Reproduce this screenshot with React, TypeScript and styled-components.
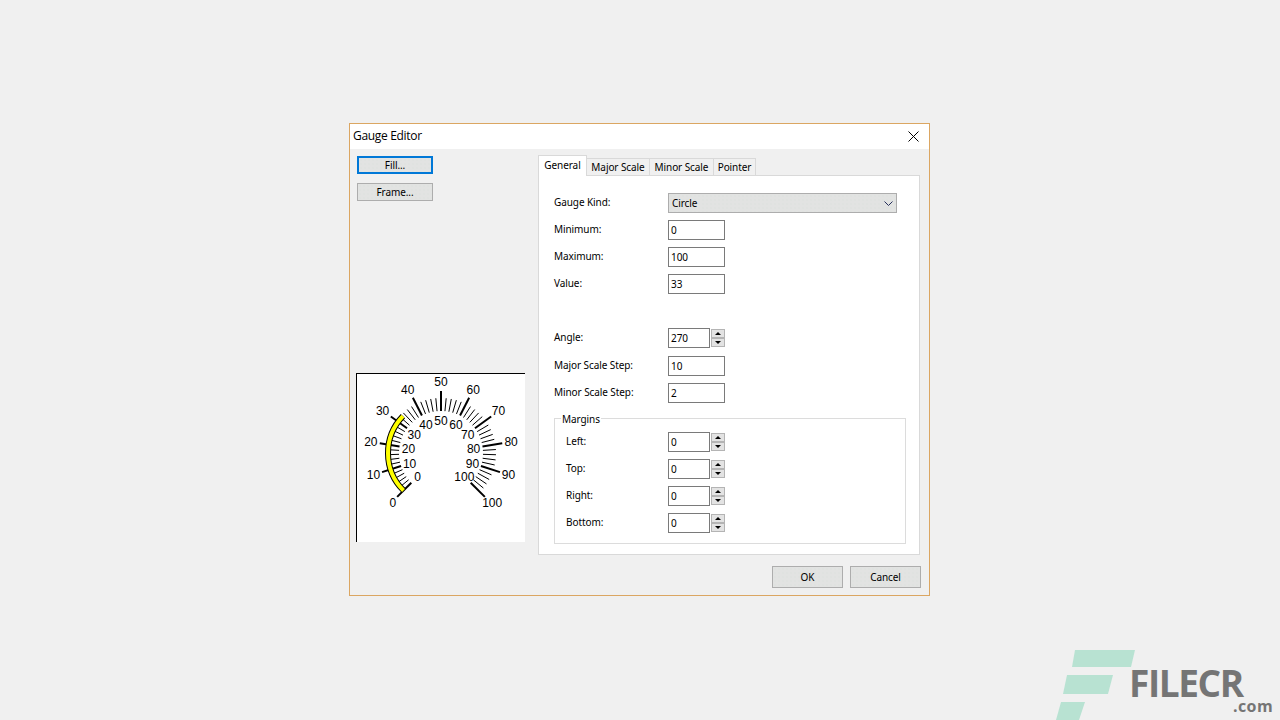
import React from "react";
import styled, { createGlobalStyle, css } from "styled-components";

const GlobalStyle = createGlobalStyle`
  html, body {
    margin: 0;
    height: 100%;
    background: #f0f0f0;
    overflow: hidden;
  }
  body {
    font-family: "Noto Sans", "Open Sans", sans-serif;
    font-size: 10px;
    letter-spacing: -0.08px;
    color: #000;
  }
`;

const dither = css`
  background-color: #e2e3e2;
  background-image: radial-gradient(circle, #dde0de 0.6px, transparent 0.8px);
  background-size: 4px 4px;
`;

const Desktop = styled.div`
  height: 720px;
  padding: 123px 0 0 349px;
  box-sizing: border-box;
`;

const Win = styled.div`
  width: 581px;
  height: 473px;
  box-sizing: border-box;
  border: 1px solid #dba662;
  background: #f0f0f0;
  display: flex;
  flex-direction: column;
`;

const TitleBar = styled.div`
  height: 25px;
  flex: none;
  background: #fff;
  display: flex;
  align-items: center;
  justify-content: space-between;
  padding: 0 10px 2px 3px;
  box-sizing: border-box;
  font-family: "Open Sans", sans-serif;
  font-size: 12px;
  letter-spacing: -0.32px;
`;

const CloseIcon = styled.svg`
  width: 11px;
  height: 11px;
  display: block;
  margin-top: 2px;
`;

const Body = styled.div`
  flex: 1;
  display: flex;
  padding: 7px 9px 0 6px;
  gap: 13px;
  min-height: 0;
`;

const LeftColumn = styled.div`
  width: 169px;
  flex: none;
  display: flex;
  flex-direction: column;
  align-items: flex-start;
  gap: 9px;
  padding-bottom: 13px;
`;

const Button = styled.button<{ $focused?: boolean; $w: number; $h: number }>`
  width: ${(p) => p.$w}px;
  height: ${(p) => p.$h}px;
  box-sizing: border-box;
  padding: 0;
  font: inherit;
  letter-spacing: inherit;
  color: #000;
  ${dither}
  border: ${(p) => (p.$focused ? "2px solid #0078d7" : "1px solid #adadad")};
`;

const SideButton = styled(Button)`
  margin-left: 1px;
`;

const GaugeBox = styled.div`
  margin-top: auto;
  width: 169px;
  height: 169px;
  box-sizing: border-box;
  background: #fff;
  border-top: 1px solid #000;
  border-left: 1px solid #000;
`;

const GaugeSvg = styled.svg`
  display: block;
  font-family: "Liberation Sans", sans-serif;
  font-size: 12px;
  letter-spacing: 0;
`;

const RightColumn = styled.div`
  flex: 1;
  display: flex;
  flex-direction: column;
  min-width: 0;
`;

const Tabs = styled.div`
  display: flex;
  align-items: flex-end;
  height: 20px;
  margin-bottom: -1px;
  position: relative;
  z-index: 1;
`;

const Tab = styled.div<{ $active?: boolean; $w: number }>`
  width: ${(p) => p.$w}px;
  height: ${(p) => (p.$active ? 21 : 18)}px;
  box-sizing: border-box;
  border: 1px solid #d9d9d9;
  border-left-width: ${(p) => (p.$active ? 1 : 0)}px;
  border-bottom-width: ${(p) => (p.$active ? 0 : 1)}px;
  background: ${(p) => (p.$active ? "#fff" : "#f0f0f0")};
  display: flex;
  align-items: center;
  justify-content: center;
  padding-bottom: ${(p) => (p.$active ? 2 : 0)}px;
`;

const Panel = styled.div`
  height: 380px;
  box-sizing: border-box;
  background: #fff;
  border: 1px solid #d9d9d9;
  padding: 17px 0 0 15px;
`;

const Row = styled.div<{ $mt?: number; $mb?: number }>`
  display: flex;
  align-items: center;
  height: 20px;
  margin-bottom: ${(p) => p.$mb ?? 7}px;
  margin-top: ${(p) => p.$mt ?? 0}px;
`;

const Label = styled.div<{ $w: number }>`
  width: ${(p) => p.$w}px;
  flex: none;
  padding-bottom: 2px;
`;

const Select = styled.div`
  width: 229px;
  height: 20px;
  box-sizing: border-box;
  ${dither}
  border: 1px solid #adadad;
  display: flex;
  align-items: center;
  justify-content: space-between;
  padding: 0 3px 0 3px;
`;

const Chevron = styled.svg`
  width: 9px;
  height: 5px;
  display: block;
`;

const Input = styled.div<{ $w: number }>`
  width: ${(p) => p.$w}px;
  height: 20px;
  box-sizing: border-box;
  background: #fff;
  border: 1px solid #7a7a7a;
  padding-left: 2px;
  display: flex;
  align-items: center;
`;

const Spin = styled.div`
  width: 14px;
  height: 18px;
  margin-left: 1px;
  display: flex;
  flex-direction: column;
  justify-content: space-between;
`;

const SpinPart = styled.div<{ $down?: boolean }>`
  height: 9px;
  box-sizing: border-box;
  background: #e3e3e3;
  border: 1px solid #b4b4b4;
  display: flex;
  align-items: center;
  justify-content: center;
  &::after {
    content: "";
    border-left: 3px solid transparent;
    border-right: 3px solid transparent;
    ${(p) =>
      p.$down ? "border-top: 3px solid #000;" : "border-bottom: 3px solid #000;"}
  }
`;

const Group = styled.div`
  position: relative;
  width: 352px;
  height: 126px;
  box-sizing: border-box;
  margin-top: 15px;
  border: 1px solid #dcdcdc;
  padding: 13px 0 0 11px;
`;

const Legend = styled.div`
  position: absolute;
  top: -7px;
  left: 6px;
  padding: 0 1px;
  background: #fff;
  line-height: 14px;
`;

const Footer = styled.div`
  display: flex;
  justify-content: flex-end;
  gap: 7px;
  padding: 11px 8px 0 0;
  height: 40px;
  box-sizing: border-box;
  flex: none;
`;

const Watermark = styled.svg`
  position: absolute;
  left: 1050px;
  top: 645px;
`;

const WatermarkName = styled.div`
  position: absolute;
  left: 1129px;
  top: 668px;
  font-family: "Open Sans", sans-serif;
  font-weight: 700;
  font-size: 37px;
  line-height: 30px;
  letter-spacing: -1.4px;
  color: #757575;
`;

const WatermarkDomain = styled.div`
  position: absolute;
  left: 1233px;
  top: 699px;
  font-family: "Open Sans", sans-serif;
  font-weight: 700;
  font-size: 16px;
  line-height: 14px;
  letter-spacing: 0.4px;
  color: #757575;
`;

const CX = 84;
const CY = 79;

// outer labels that sit a little off the circle in the original
const labelNudge: Record<number, number> = { 0: 2, 30: -1, 40: -1, 100: 1 };

function polar(v: number, r: number) {
  const a = ((-135 + 2.7 * v) * Math.PI) / 180;
  return { x: CX + r * Math.sin(a), y: CY - r * Math.cos(a) };
}

function arcPath(to: number, r: number) {
  const s = polar(0, r);
  const e = polar(to, r);
  return `M${s.x} ${s.y}A${r} ${r} 0 0 1 ${e.x} ${e.y}`;
}

const Gauge = () => {
  const ticks: React.ReactNode[] = [];
  for (let v = 0; v <= 100; v += 2) {
    const major = v % 10 === 0;
    const a = polar(v, 42);
    const b = polar(v, major ? 62 : 55);
    ticks.push(
      <line key={v} x1={a.x} y1={a.y} x2={b.x} y2={b.y} stroke="#000" strokeWidth={major ? 2 : 1} />
    );
  }
  const labels: React.ReactNode[] = [];
  for (let v = 0; v <= 100; v += 10) {
    const o = polar(v, 71);
    const i = polar(v, 33);
    labels.push(
      <text key={"o" + v} x={o.x + (labelNudge[v] ?? 0)} y={o.y + 4} textAnchor="middle">{v}</text>,
      <text key={"i" + v} x={i.x} y={i.y + 5} textAnchor="middle">{v}</text>
    );
  }
  return (
    <GaugeSvg width="168" height="168" viewBox="0 0 168 168">
      {ticks}
      <path d={arcPath(33, 53)} fill="none" stroke="#000" strokeWidth="6" />
      <path d={arcPath(33, 53)} fill="none" stroke="#ff0" strokeWidth="4" />
      {labels}
    </GaugeSvg>
  );
};

const Spinner = () => (
  <Spin>
    <SpinPart />
    <SpinPart $down />
  </Spin>
);

const App = () => {
  return (
    <Desktop>
      <GlobalStyle />
      <Win>
        <TitleBar>
          Gauge Editor
          <CloseIcon viewBox="0 0 11 11">
            <path d="M0.5 0.5L10.5 10.5M10.5 0.5L0.5 10.5" stroke="#000" strokeWidth="1" fill="none" />
          </CloseIcon>
        </TitleBar>
        <Body>
          <LeftColumn>
            <SideButton $focused $w={76} $h={18}>Fill...</SideButton>
            <SideButton $w={76} $h={18}>Frame...</SideButton>
            <GaugeBox>
              <Gauge />
            </GaugeBox>
          </LeftColumn>
          <RightColumn>
            <Tabs>
              <Tab $active $w={49}>General</Tab>
              <Tab $w={63}>Major Scale</Tab>
              <Tab $w={64}>Minor Scale</Tab>
              <Tab $w={42}>Pointer</Tab>
            </Tabs>
            <Panel>
              <Row>
                <Label $w={114}>Gauge Kind:</Label>
                <Select>
                  Circle
                  <Chevron viewBox="0 0 9 5">
                    <path d="M0.5 0.5L4.5 4.5L8.5 0.5" stroke="#26305c" fill="none" />
                  </Chevron>
                </Select>
              </Row>
              <Row>
                <Label $w={114}>Minimum:</Label>
                <Input $w={57}>0</Input>
              </Row>
              <Row>
                <Label $w={114}>Maximum:</Label>
                <Input $w={57}>100</Input>
              </Row>
              <Row>
                <Label $w={114}>Value:</Label>
                <Input $w={57}>33</Input>
              </Row>
              <Row $mt={34} $mb={8}>
                <Label $w={114}>Angle:</Label>
                <Input $w={42}>270</Input>
                <Spinner />
              </Row>
              <Row>
                <Label $w={114}>Major Scale Step:</Label>
                <Input $w={57}>10</Input>
              </Row>
              <Row>
                <Label $w={114}>Minor Scale Step:</Label>
                <Input $w={57}>2</Input>
              </Row>
              <Group>
                <Legend>Margins</Legend>
                {["Left:", "Top:", "Right:", "Bottom:"].map((name) => (
                  <Row key={name}>
                    <Label $w={102}>{name}</Label>
                    <Input $w={42}>0</Input>
                    <Spinner />
                  </Row>
                ))}
              </Group>
            </Panel>
          </RightColumn>
        </Body>
        <Footer>
          <Button $w={71} $h={22}>OK</Button>
          <Button $w={71} $h={22}>Cancel</Button>
        </Footer>
      </Win>
      <Watermark width="90" height="75" viewBox="1050 645 90 75">
        <polygon points="1075,650 1135,650 1131,667 1072,667" fill="#b8e2d2" />
        <polygon points="1067,675 1113,675 1108,694 1063,694" fill="#b8e2d2" />
        <polygon points="1061,702 1085,702 1079,720 1056,720" fill="#b8e2d2" />
      </Watermark>
      <WatermarkName>FILECR</WatermarkName>
      <WatermarkDomain>.com</WatermarkDomain>
    </Desktop>
  );
};

export default App;
